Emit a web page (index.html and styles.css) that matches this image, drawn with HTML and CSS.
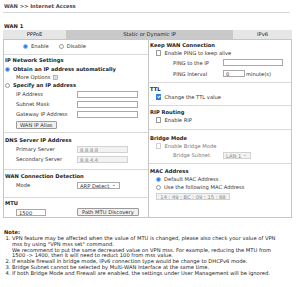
FILE: index.html
```html
<!DOCTYPE html>
<html lang="en">
<head>
    <meta charset="UTF-8">
    <meta name="viewport" content="width=device-width, initial-scale=1.0">
    <title>WAN Internet Access</title>
    <link rel="stylesheet" href="styles.css">
</head>
<body>
<div class="page">
    <div class="title">WAN &gt;&gt; Internet Access</div>
    <div class="wan-name">WAN 1</div>

    <div class="tabs">
        <div class="tab tab-pppoe">PPPoE</div>
        <div class="tab tab-static active">Static or Dynamic IP</div>
        <div class="tab tab-ipv6">IPv6</div>
    </div>

    <div class="panel">
        <!-- left column -->
        <div class="col col-left">
            <div class="enable-row">
                <span class="opt"><span class="radio on"></span>Enable</span>
                <span class="opt"><span class="radio"></span>Disable</span>
            </div>

            <div class="sec sec-ip">
                <div class="head">IP Network Settings</div>
                <div class="row strong"><span class="radio on"></span>Obtain an IP address automatically</div>
                <div class="row indent">More Options
                    <svg class="more-icon" width="5" height="5" viewBox="0 0 5 5">
                        <rect x="0.5" y="0.5" width="4" height="4" fill="#fff" stroke="#8a8a8a" stroke-width="0.6"/>
                        <line x1="1.3" y1="1.8" x2="3.7" y2="1.8" stroke="#8a8a8a" stroke-width="0.5"/>
                        <line x1="1.3" y1="3.2" x2="3.7" y2="3.2" stroke="#8a8a8a" stroke-width="0.5"/>
                    </svg>
                </div>
                <div class="row strong"><span class="radio"></span>Specify an IP address</div>
                <div class="row field indent"><span class="lbl">IP Address</span><span class="box w-ip"></span></div>
                <div class="row field indent"><span class="lbl">Subnet Mask</span><span class="box w-ip"></span></div>
                <div class="row field indent"><span class="lbl">Gateway IP Address</span><span class="box w-ip"></span></div>
                <div class="row btn-row indent"><span class="btn">WAN IP Alias</span></div>
            </div>

            <div class="sec sec-dns">
                <div class="head">DNS Server IP Address</div>
                <div class="row field indent"><span class="lbl">Primary Server</span><span class="box w-dns off">8.8.8.8</span></div>
                <div class="row field indent"><span class="lbl">Secondary Server</span><span class="box w-dns off">8.8.4.4</span></div>
            </div>

            <div class="sec sec-detect">
                <div class="head">WAN Connection Detection</div>
                <div class="row field indent"><span class="lbl">Mode</span><span class="box select w-mode">ARP Detect<span class="caret">&#8964;</span></span></div>
            </div>

            <div class="sec sec-mtu last">
                <div class="head">MTU</div>
                <div class="row field indent">
                    <span class="box w-mtu">1500</span>
                    <span class="btn btn-mtu">Path MTU Discovery</span>
                </div>
            </div>
        </div>

        <!-- right column -->
        <div class="col col-right">
            <div class="sec sec-keep">
                <div class="head">Keep WAN Connection</div>
                <div class="row"><span class="check"></span>Enable PING to keep alive</div>
                <div class="row field tall sub"><span class="lbl">PING to the IP</span><span class="box w-ping"></span></div>
                <div class="row field tall sub"><span class="lbl">PING Interval</span><span class="box w-int">0</span><span class="unit">minute(s)</span></div>
            </div>

            <div class="sec sec-ttl">
                <div class="head">TTL</div>
                <div class="row"><span class="check on"></span>Change the TTL value</div>
            </div>

            <div class="sec sec-rip">
                <div class="head">RIP Routing</div>
                <div class="row"><span class="check"></span>Enable RIP</div>
            </div>

            <div class="sec sec-bridge">
                <div class="head">Bridge Mode</div>
                <div class="row"><span class="check off"></span>Enable Bridge Mode</div>
                <div class="row field sub"><span class="lbl">Bridge Subnet</span><span class="box select w-lan off">LAN 1<span class="caret">&#8964;</span></span></div>
            </div>

            <div class="sec sec-mac last">
                <div class="head">MAC Address</div>
                <div class="row"><span class="radio on"></span>Default MAC Address</div>
                <div class="row short"><span class="radio"></span>Use the following MAC Address</div>
                <div class="row field"><span class="box w-mac off">14 : 49 : BC : 09 : 15 : 88</span></div>
            </div>
        </div>
    </div>

    <div class="note">
        <div class="note-title">Note:</div>
        <ol class="note-list">
            <li>VPN feature may be affected when the value of MTU is changed, please also check your value of VPN<br>
                mss by using "VPN mss set" command.<br>
                We recommend to put the same decreased value on VPN mss. For example, reducing the MTU from<br>
                1500 -&gt; 1400, then it will need to reduct 100 from mss value.</li>
            <li>If enable firewall in bridge mode, IPv6 connection type would be change to DHCPv6 mode.</li>
            <li>Bridge Subnet cannot be selected by Multi-WAN Interface at the same time.</li>
            <li>If both Bridge Mode and Firewall are enabled, the settings under User Management will be ignored.</li>
        </ol>
    </div>
</div>
</body>
</html>
```

FILE: styles.css
```css
/* Basic styling */
body {
    margin: 0;
    background-color: #fff;
    color: #333;
    font-family: "DejaVu Sans", Verdana, sans-serif;
    font-size: 5.2px;
}

.page {
    padding: 0 8px 0 3px;
}

.title {
    height: 9px;
    padding-top: 3px;
    line-height: 7px;
    font-weight: bold;
    color: #3a4a5c;
    border-bottom: 1px solid #d6d6d6;
    margin-right: 2px;
    padding-left: 1px;
}

.wan-name {
    margin-top: 9px;
    line-height: 8px;
    font-weight: bold;
    color: #222;
    padding-left: 1px;
}

/* Tabs */
.tabs {
    display: flex;
    height: 9px;
    line-height: 9px;
    width: 289px;
}

.tab {
    text-align: center;
    background-color: #e6e6e6;
    color: #222;
}

.tab-pppoe { width: 63px; }
.tab-static { width: 167px; }
.tab-ipv6 { width: 59px; }

.tab.active {
    background-color: #c9c9c9;
}

/* Panel */
.panel {
    display: grid;
    grid-template-columns: 144px 1fr;
    width: 289px;
    height: 179px;
    box-sizing: border-box;
    border: 1px solid #c6c6c6;
}

.col-right {
    border-left: 1px solid #c6c6c6;
}

.enable-row {
    height: 16px;
    border-bottom: 1px solid #d9d9d9;
    display: flex;
    align-items: center;
    padding-left: 19px;
    gap: 10px;
    box-sizing: content-box;
    margin-top: -2px;
}

.opt {
    display: flex;
    align-items: center;
}

.sec {
    border-bottom: 1px solid #d9d9d9;
}

.sec.last {
    border-bottom: none;
}

.head {
    height: 8px;
    line-height: 8px;
    font-weight: bold;
    color: #222;
    padding-left: 1px;
}

.row {
    height: 8px;
    display: flex;
    align-items: center;
    white-space: nowrap;
}

.row.field { height: 10px; }
.row.tall { height: 11px; }
.row.short { height: 8px; }
.row.btn-row { height: 11px; }

.row.strong {
    font-weight: bold;
    color: #222;
    padding-left: 1px;
}

.indent {
    padding-left: 12px;
}

.lbl {
    width: 61px;
    flex-shrink: 0;
}

.col-right .row {
    padding-left: 7px;
}

.col-right .row.sub {
    padding-left: 24px;
}

.col-right .row.sub .lbl {
    width: 50px;
}

/* Left sections */
.sec-ip { padding: 1px 0 2px; }
.sec-ip .head { margin-bottom: 1px; }
.sec-dns { padding: 3px 0 5px; }
.sec-detect { padding: 2px 0 7px; }
.sec-mtu { padding-top: 1px; }

/* Right sections */
.sec-keep { padding: 1px 0 3px; }
.sec-ttl { padding: 2px 0 4px; }
.sec-rip { padding: 2px 0 5px; }
.sec-bridge { padding: 4px 0 3px; }
.sec-mac { padding-top: 3px; }

/* Controls */
.radio {
    width: 3px;
    height: 3px;
    border-radius: 50%;
    border: 0.6px solid #9a9a9a;
    background-color: #fff;
    margin-right: 3px;
    flex-shrink: 0;
}

.radio.on {
    background-color: #2f7de1;
    border-color: #8fbaf0;
}

.check {
    width: 3.4px;
    height: 3.4px;
    border: 0.6px solid #9a9a9a;
    border-radius: 0.6px;
    background-color: #fff;
    margin-right: 3px;
    flex-shrink: 0;
    position: relative;
}

.check.on {
    background-color: #2f7de1;
    border-color: #2f7de1;
}

.check.on::after {
    content: "";
    position: absolute;
    left: 1.1px;
    top: 0.2px;
    width: 0.9px;
    height: 1.8px;
    border: solid #fff;
    border-width: 0 0.6px 0.6px 0;
    transform: rotate(45deg);
}

.check.off {
    border-color: #d0d0d0;
}

.sec-bridge .row {
    color: #777;
}

.box {
    height: 7px;
    line-height: 7px;
    box-sizing: border-box;
    border: 0.6px solid #a9a9a9;
    background-color: #fff;
    padding-left: 2px;
    color: #333;
    display: inline-block;
}

.box.off {
    background-color: #f2f2f2;
    border-color: #d2d2d2;
    color: #8a8a8a;
}

.w-ip { width: 61px; }
.w-dns { width: 51px; }
.w-mode { width: 43px; }
.w-mtu { width: 30px; margin-right: 31px; }
.w-ping { width: 60px; }
.w-int { width: 22px; }
.w-lan { width: 28px; }
.w-mac { width: 74px; margin-left: 0; text-align: center; padding-left: 0; }

.select {
    position: relative;
}

.caret {
    position: absolute;
    right: 3px;
    top: -1.5px;
    font-size: 5px;
}

.unit {
    margin-left: 1px;
}

.btn {
    height: 8px;
    line-height: 7px;
    box-sizing: border-box;
    padding: 0 3px;
    border: 0.6px solid #9a9a9a;
    border-radius: 1px;
    background-color: #f0f0f0;
    color: #333;
}

.btn-mtu {
    padding: 0 4px;
}

.more-icon {
    margin-left: 2px;
}

/* Notes */
.note {
    margin-top: 11px;
    padding-left: 1px;
    color: #222;
}

.note-title {
    font-weight: bold;
    line-height: 6px;
}

.note-list {
    margin: 1px 0 0;
    padding-left: 8px;
    line-height: 5.8px;
    white-space: nowrap;
}
```
